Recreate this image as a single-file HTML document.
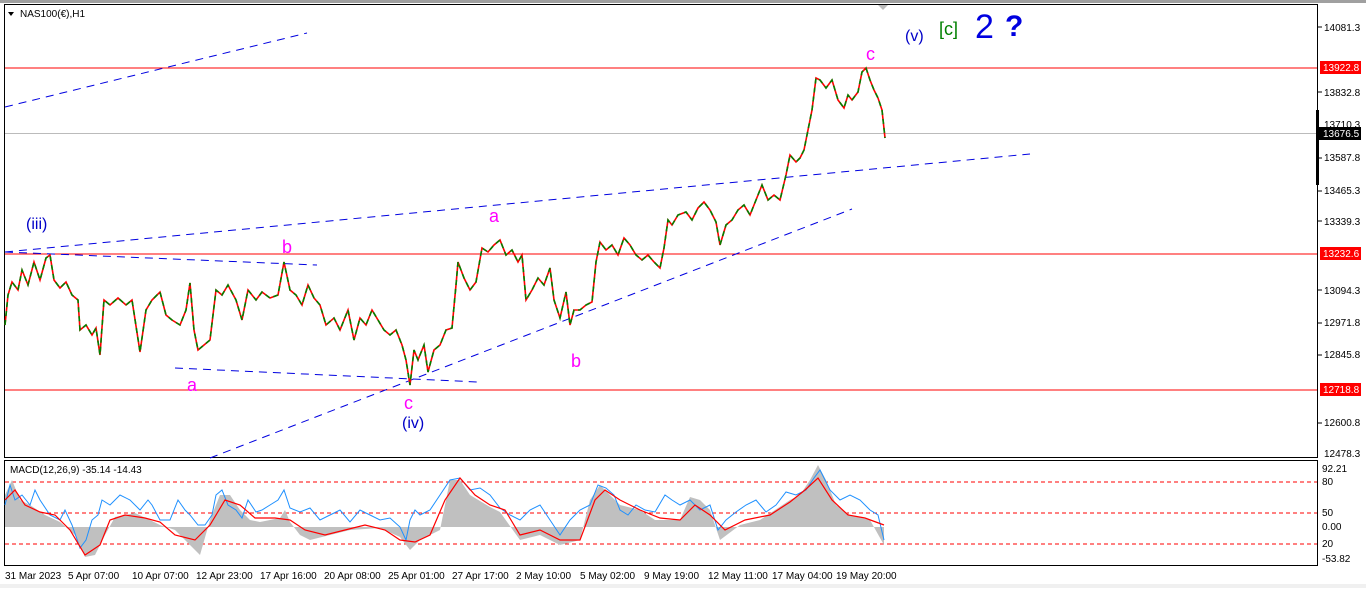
<!DOCTYPE html>
<html><head><meta charset="utf-8"><style>
body{margin:0;width:1366px;height:588px;background:#fff;overflow:hidden;font-family:"Liberation Sans",sans-serif}
svg text{font-family:"Liberation Sans",sans-serif}
</style></head><body>
<svg width="1366" height="588" xmlns="http://www.w3.org/2000/svg">
<defs>
<polyline id="pr" points="5,325 8,295 12,282 18,290 22,270 28,285 34,262 40,280 46,258 50,255 54,280 60,288 66,282 72,295 78,300 80,330 86,325 92,335 96,328 100,355 104,300 110,305 118,298 126,305 132,300 140,352 146,310 152,300 160,292 166,315 172,320 180,325 186,310 190,283 194,330 198,350 204,345 210,340 216,290 222,295 228,285 236,300 242,320 248,290 256,300 262,292 270,298 278,295 284,262 290,290 296,295 302,305 308,285 314,298 320,305 326,325 334,318 340,330 348,310 354,340 360,318 366,325 372,310 378,320 384,330 390,335 396,330 402,345 406,360 410,385 414,350 418,360 424,345 428,372 434,350 440,345 446,330 452,328 456,285 458,262 464,278 470,290 476,282 482,248 488,252 494,245 500,240 506,255 512,250 518,262 522,255 526,300 532,290 538,278 544,285 550,268 554,300 560,318 566,292 570,325 574,310 580,310 586,305 592,302 596,262 600,242 606,250 612,245 618,255 624,238 630,245 636,255 642,260 648,255 654,262 660,268 664,248 668,220 672,225 678,215 686,212 692,220 698,208 704,202 710,210 716,222 720,245 726,225 732,220 738,210 744,205 750,215 756,200 762,185 768,200 774,195 780,200 786,175 790,155 796,162 800,158 804,150 808,130 812,110 816,78 820,80 826,88 832,80 838,100 844,108 848,95 852,100 858,92 862,72 866,68 870,80 874,90 878,98 882,110 885,138"/>
</defs>
<rect x="0" y="0" width="1366" height="588" fill="#fff"/>
<rect x="0" y="0" width="1366" height="3" fill="#a0a0a0"/>
<rect x="0" y="584" width="1366" height="4" fill="#f0f0f0"/>
<rect x="4.5" y="4.5" width="1313" height="453" fill="none" stroke="#000"/>
<rect x="4.5" y="460.5" width="1313" height="105" fill="none" stroke="#000"/>
<polygon points="878,5 888,5 883,10" fill="#bbb"/>
<polygon points="8,12 14,12 11,16" fill="#000"/>
<text x="20" y="17" font-size="10">NAS100(€),H1</text>
<line x1="5" y1="68" x2="1317" y2="68" stroke="#f00"/>
<line x1="5" y1="254" x2="1317" y2="254" stroke="#f00"/>
<line x1="5" y1="390" x2="1317" y2="390" stroke="#f00"/>
<line x1="5" y1="133.5" x2="1317" y2="133.5" stroke="#bbb"/>
<g stroke="#0000e0" stroke-dasharray="8,6" fill="none">
<line x1="5" y1="107" x2="307" y2="33"/>
<line x1="5" y1="252" x2="1030" y2="154"/>
<line x1="5" y1="252" x2="317" y2="265"/>
<line x1="175" y1="368" x2="478" y2="382"/>
<line x1="210" y1="458" x2="852" y2="209"/>
</g>
<use href="#pr" fill="none" stroke="#ff0000" stroke-width="1.6"/>
<use href="#pr" fill="none" stroke="#008000" stroke-width="1.6" stroke-dasharray="5,4"/>
<text x="26" y="229" font-size="16" fill="#0000c8">(iii)</text>
<text x="282" y="253" font-size="18" fill="#ff00ff">b</text>
<text x="187" y="391" font-size="18" fill="#ff00ff">a</text>
<text x="404" y="409" font-size="18" fill="#ff00ff">c</text>
<text x="402" y="428" font-size="16" fill="#0000c8">(iv)</text>
<text x="489" y="222" font-size="18" fill="#ff00ff">a</text>
<text x="571" y="367" font-size="18" fill="#ff00ff">b</text>
<text x="866" y="60" font-size="18" fill="#ff00ff">c</text>
<text x="905" y="41" font-size="16" fill="#0000c8">(v)</text>
<text x="939" y="35" font-size="18" fill="#008000">[c]</text>
<text x="975" y="38" font-size="34" fill="#0000e0">2</text>
<text x="1005" y="36" font-size="30" fill="#0000e0" font-weight="bold">?</text>
<g font-size="10" fill="#000">
<text x="1324" y="31">14081.3</text>
<text x="1324" y="96">13832.8</text>
<text x="1324" y="128">13710.3</text>
<text x="1324" y="161">13587.8</text>
<text x="1324" y="194">13465.3</text>
<text x="1324" y="225">13339.3</text>
<text x="1324" y="294">13094.3</text>
<text x="1324" y="326">12971.8</text>
<text x="1324" y="358">12845.8</text>
<text x="1324" y="426">12600.8</text>
<text x="1324" y="457">12478.3</text>
</g>
<g stroke="#000"><line x1="1318" y1="27" x2="1322" y2="27"/><line x1="1318" y1="92" x2="1322" y2="92"/><line x1="1318" y1="158" x2="1322" y2="158"/><line x1="1318" y1="191" x2="1322" y2="191"/><line x1="1318" y1="221" x2="1322" y2="221"/><line x1="1318" y1="290" x2="1322" y2="290"/><line x1="1318" y1="323" x2="1322" y2="323"/><line x1="1318" y1="355" x2="1322" y2="355"/><line x1="1318" y1="423" x2="1322" y2="423"/></g>
<rect x="1316" y="110" width="3" height="75" fill="#000"/>
<rect x="1320" y="61" width="41" height="13" fill="#f00"/><text x="1323" y="71" font-size="10" fill="#fff">13922.8</text>
<rect x="1320" y="247" width="41" height="13" fill="#f00"/><text x="1323" y="257" font-size="10" fill="#fff">13232.6</text>
<rect x="1320" y="383" width="41" height="13" fill="#f00"/><text x="1323" y="393" font-size="10" fill="#fff">12718.8</text>
<rect x="1318" y="127" width="43" height="13" fill="#000"/><text x="1323" y="137" font-size="10" fill="#fff">13676.5</text>
<text x="10" y="473" font-size="10">MACD(12,26,9) -35.14 -14.43</text>
<g stroke="#f00" stroke-dasharray="4,3"><line x1="5" y1="482" x2="1317" y2="482"/><line x1="5" y1="513" x2="1317" y2="513"/><line x1="5" y1="544" x2="1317" y2="544"/></g>
<polygon fill="#c0c0c0" points="5,527 5,495 12,480 20,500 30,505 45,515 60,522 75,535 85,557 95,555 105,535 115,517 135,513 150,520 160,525 175,530 190,545 200,555 210,520 220,495 230,495 240,510 250,520 260,522 280,518 285,510 290,522 300,535 310,540 330,535 350,530 380,528 400,537 410,550 420,540 440,530 450,480 460,480 470,495 490,507 500,512 520,540 540,535 560,545 580,540 590,500 600,485 610,495 620,505 640,510 655,520 670,520 680,520 690,497 700,500 710,510 720,540 740,525 760,520 790,500 800,495 810,480 818,465 826,480 836,505 850,515 870,520 884,545 884,527"/>
<polyline fill="none" stroke="#1e90ff" stroke-width="1" points="5,505 10,485 15,500 22,495 30,505 35,490 40,500 50,515 60,520 65,510 72,525 80,548 86,540 92,520 98,515 102,500 110,505 120,495 130,500 140,510 148,500 152,505 160,520 170,520 178,500 185,510 190,515 198,525 205,525 212,515 216,495 222,490 228,505 236,510 242,518 248,500 256,512 262,510 270,505 278,500 284,490 290,508 300,512 310,508 320,520 330,515 340,510 350,522 360,510 370,515 380,520 390,518 400,527 406,540 410,520 415,510 420,515 430,510 440,495 450,480 460,478 470,490 480,488 490,495 500,508 510,515 520,520 530,510 540,505 550,520 560,535 570,520 580,510 590,505 598,485 606,488 614,495 620,510 628,515 636,505 645,510 655,512 665,495 672,500 680,505 690,500 700,510 710,505 718,530 726,520 736,512 746,505 756,500 766,512 776,505 786,492 796,495 806,490 814,478 820,470 830,490 840,500 850,495 860,500 870,510 878,515 884,540"/>
<polyline fill="none" stroke="#f00" stroke-width="1.2" points="5,500 15,490 25,505 40,512 55,515 70,530 85,555 100,545 110,520 125,515 145,518 160,522 175,535 195,540 210,525 225,500 240,505 255,518 275,518 290,520 305,530 325,535 345,530 365,525 385,530 400,540 415,542 430,535 445,500 460,478 475,495 490,505 505,510 520,535 540,530 560,540 580,540 595,500 605,490 620,500 640,510 660,518 680,520 695,505 710,515 725,530 745,520 770,515 790,502 805,490 818,478 832,500 848,515 865,518 884,525"/>
<g font-size="10" fill="#000">
<text x="1322" y="472">92.21</text>
<text x="1322" y="485">80</text>
<text x="1322" y="516">50</text>
<text x="1322" y="530">0.00</text>
<text x="1322" y="547">20</text>
<text x="1322" y="562">-53.82</text>
</g>
<g font-size="10" fill="#000">
<text x="5" y="579">31 Mar 2023</text>
<text x="68" y="579">5 Apr 07:00</text>
<text x="132" y="579">10 Apr 07:00</text>
<text x="196" y="579">12 Apr 23:00</text>
<text x="260" y="579">17 Apr 16:00</text>
<text x="324" y="579">20 Apr 08:00</text>
<text x="388" y="579">25 Apr 01:00</text>
<text x="452" y="579">27 Apr 17:00</text>
<text x="516" y="579">2 May 10:00</text>
<text x="580" y="579">5 May 02:00</text>
<text x="644" y="579">9 May 19:00</text>
<text x="708" y="579">12 May 11:00</text>
<text x="772" y="579">17 May 04:00</text>
<text x="836" y="579">19 May 20:00</text>
</g>
</svg>
</body></html>
